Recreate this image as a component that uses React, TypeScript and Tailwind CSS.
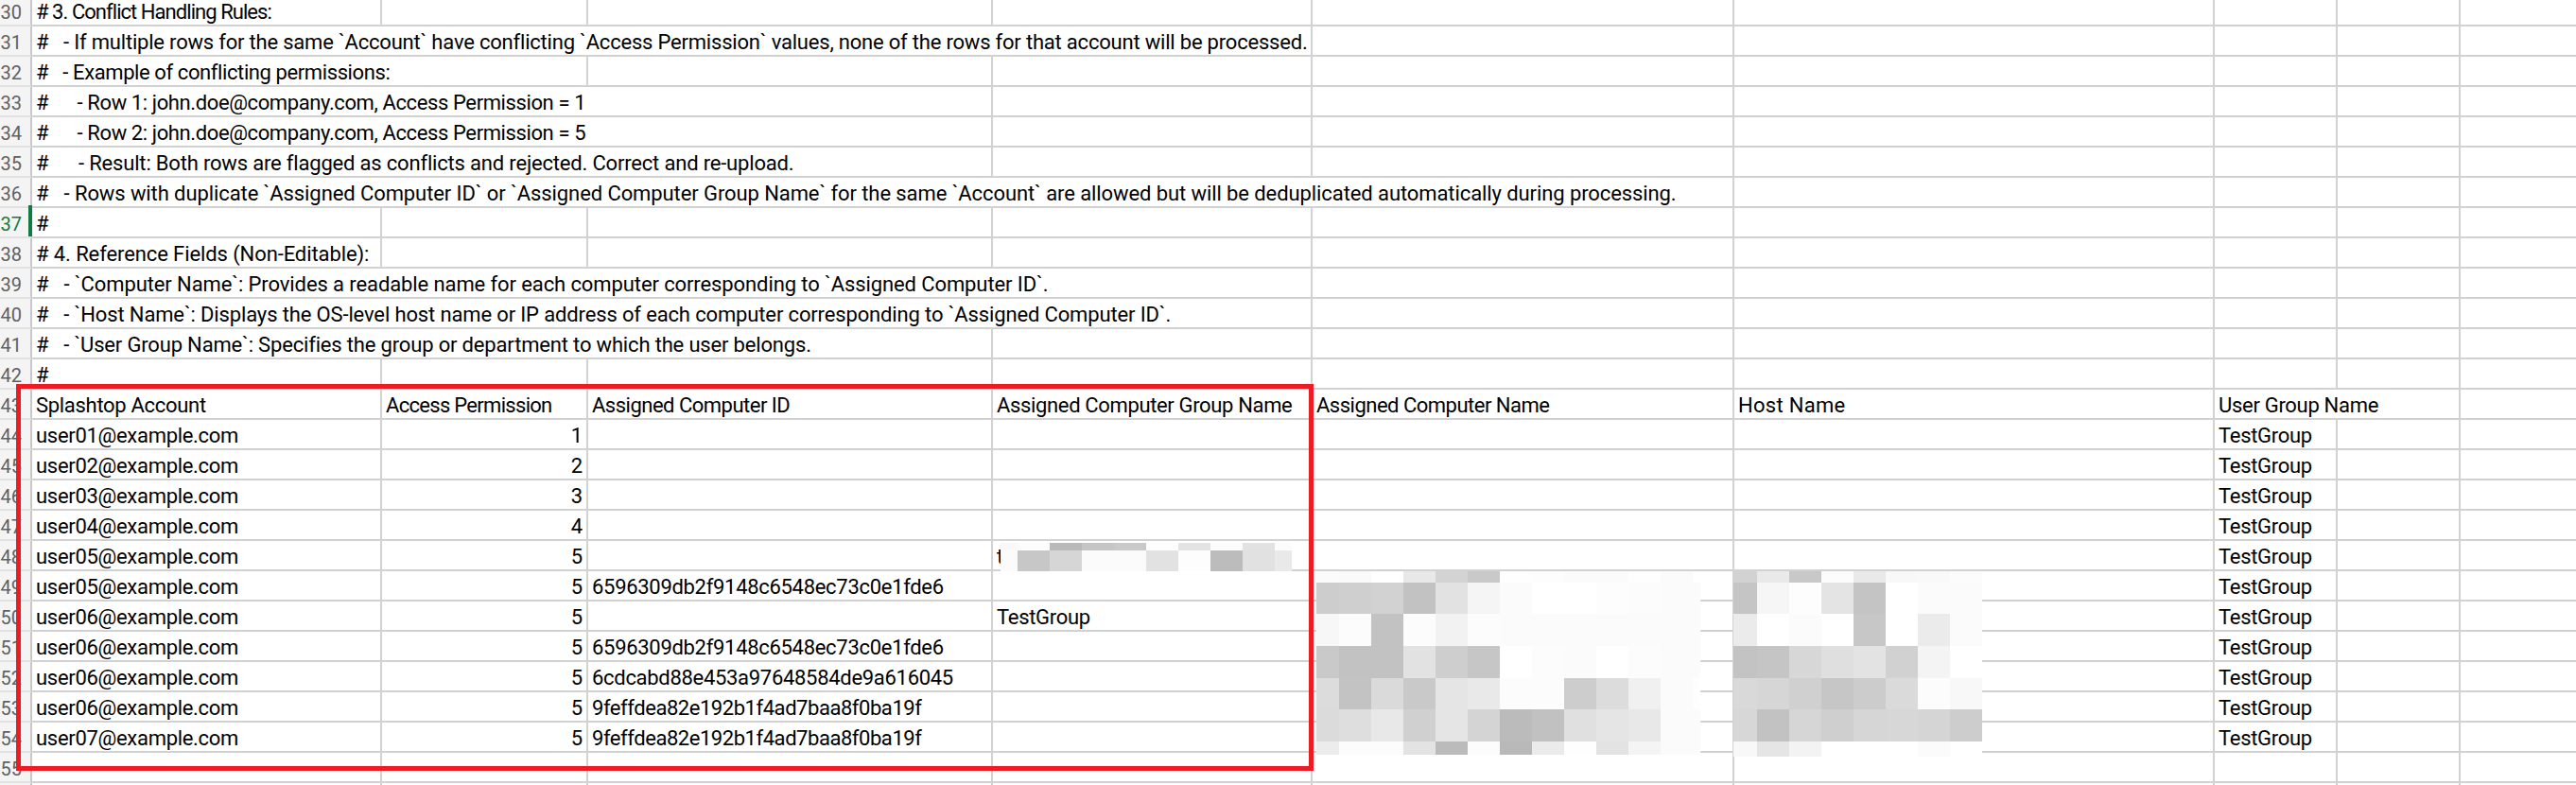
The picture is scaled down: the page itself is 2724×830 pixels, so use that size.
const FONT = "font-['Roboto','Liberation_Sans',sans-serif]";

type Cell = { t?: string; cls?: string };

const span2 = "col-span-2";
const span3 = "col-span-3";
const span4 = "col-span-4";
const span5 = "col-span-5";

function comment(text: string, cls: string, cols: number): Cell[] {
  const out: Cell[] = [{ t: text, cls }];
  for (let i = cols; i < 9; i++) out.push({});
  return out;
}

const rows: { n: number; cells: Cell[] }[] = [
  { n: 30, cells: comment("# 3. Conflict Handling Rules:", "tracking-[-0.95px]", 1) },
  { n: 31, cells: comment("#   - If multiple rows for the same `Account` have conflicting `Access Permission` values, none of the rows for that account will be processed.", `${span4} tracking-[-0.2px]`, 4) },
  { n: 32, cells: comment("#   - Example of conflicting permissions:", `${span2} tracking-[-0.4px]`, 2) },
  { n: 33, cells: comment("#      - Row 1: john.doe@company.com, Access Permission = 1", `${span3} tracking-[-0.39px]`, 3) },
  { n: 34, cells: comment("#      - Row 2: john.doe@company.com, Access Permission = 5", `${span3} tracking-[-0.39px]`, 3) },
  { n: 35, cells: comment("#      - Result: Both rows are flagged as conflicts and rejected. Correct and re-upload.", `${span3} tracking-[-0.18px]`, 3) },
  { n: 36, cells: comment("#   - Rows with duplicate `Assigned Computer ID` or `Assigned Computer Group Name` for the same `Account` are allowed but will be deduplicated automatically during processing.", `${span5} tracking-[-0.09px]`, 5) },
  { n: 37, cells: comment("#", "", 1) },
  { n: 38, cells: comment("# 4. Reference Fields (Non-Editable):", "tracking-[-0.1px]", 1) },
  { n: 39, cells: comment("#   - `Computer Name`: Provides a readable name for each computer corresponding to `Assigned Computer ID`.", `${span4} tracking-[-0.1px]`, 4) },
  { n: 40, cells: comment("#   - `Host Name`: Displays the OS-level host name or IP address of each computer corresponding to `Assigned Computer ID`.", `${span4} tracking-[-0.14px]`, 4) },
  { n: 41, cells: comment("#   - `User Group Name`: Specifies the group or department to which the user belongs.", `${span3} tracking-[-0.17px]`, 3) },
  { n: 42, cells: comment("#", "", 1) },
  {
    n: 43,
    cells: [
      { t: "Splashtop Account", cls: "tracking-[-0.3px]" },
      { t: "Access Permission", cls: "tracking-[-0.7px]" },
      { t: "Assigned Computer ID", cls: "tracking-[-0.5px]" },
      { t: "Assigned Computer Group Name", cls: "tracking-[-0.35px]" },
      { t: "Assigned Computer Name", cls: "tracking-[-0.5px]" },
      { t: "Host Name", cls: "tracking-[0.3px]" },
      { t: "User Group Name", cls: `${span2} tracking-[-0.3px]` },
      {},
    ],
  },
];

const data: [number, string, string, string, string, string][] = [
  [44, "user01@example.com", "1", "", "", ""],
  [45, "user02@example.com", "2", "", "", ""],
  [46, "user03@example.com", "3", "", "", ""],
  [47, "user04@example.com", "4", "", "", ""],
  [48, "user05@example.com", "5", "", "", "t"],
  [49, "user05@example.com", "5", "6596309db2f9148c6548ec73c0e1fde6", "tracking-[-0.3px]", ""],
  [50, "user06@example.com", "5", "", "", "TestGroup"],
  [51, "user06@example.com", "5", "6596309db2f9148c6548ec73c0e1fde6", "tracking-[-0.3px]", ""],
  [52, "user06@example.com", "5", "6cdcabd88e453a97648584de9a616045", "tracking-[-0.3px]", ""],
  [53, "user06@example.com", "5", "9feffdea82e192b1f4ad7baa8f0ba19f", "tracking-[-0.45px]", ""],
  [54, "user07@example.com", "5", "9feffdea82e192b1f4ad7baa8f0ba19f", "tracking-[-0.45px]", ""],
];

for (const [n, a, p, id, idCls, g] of data) {
  rows.push({
    n,
    cells: [
      { t: a, cls: "tracking-[-0.3px]" },
      { t: p, cls: "justify-end pr-[4px]" },
      { t: id, cls: idCls },
      { t: g, cls: "tracking-[-0.3px]" },
      {},
      {},
      { t: "TestGroup", cls: "tracking-[-0.3px]" },
      {},
      {},
    ],
  });
}
rows.push({ n: 55, cells: Array.from({ length: 9 }, () => ({})) });
rows.push({ n: 56, cells: Array.from({ length: 9 }, () => ({})) });

const computerMosaic = [
  ["fbfbfb", "fafafa", "ffffff", "e8e8e8", "d3d3d3", "c9c9c9", "fefefe", "fdfdfd", "fbfbfb", "fbfbfb", "fefefe", "fbfbfb", "ffffff"],
  ["cdcdcd", "cfcfcf", "d2d2d2", "c2c2c2", "e2e2e2", "f5f5f5", "fbfbfb", "ffffff", "ffffff", "fdfdfd", "fcfcfc", "fbfbfb", "fbfbfb"],
  ["f7f7f7", "fcfcfc", "c2c2c2", "fcfcfc", "f2f2f2", "fcfcfc", "fbfbfb", "fbfbfb", "fbfbfb", "fbfbfb", "fbfbfb", "fbfbfb", "fbfbfb"],
  ["c9c9c9", "c2c2c2", "c2c2c2", "e2e2e2", "cecece", "c6c6c6", "ffffff", "fcfcfc", "fbfbfb", "ffffff", "fcfcfc", "fbfbfb", "fbfbfb"],
  ["dcdcdc", "c3c3c3", "dadada", "c9c9c9", "e5e5e5", "e9e9e9", "fcfcfc", "fcfcfc", "cdcdcd", "dcdcdc", "f0f0f0", "fbfbfb", "fefefe"],
  ["dbdbdb", "dedede", "e8e8e8", "d0d0d0", "e5e5e5", "d4d4d4", "bbbbbb", "c1c1c1", "e0e0e0", "e5e5e5", "e8e8e8", "fbfbfb", "fbfbfb"],
  ["ececec", "fcfcfc", "fcfcfc", "e3e3e3", "bbbbbb", "fcfcfc", "b9b9b9", "ebebeb", "fefefe", "e3e3e3", "f4f4f4", "fbfbfb", "fbfbfb"],
];

const hostMosaic = [
  ["d2d2d2", "e9e9e9", "c8c8c8", "fcfcfc", "e9e9e9", "f8f8f8", "f9f9f9", "fcfcfc"],
  ["c5c5c5", "f6f6f6", "fdfdfd", "e4e4e4", "c4c4c4", "ffffff", "fbfbfb", "fbfbfb"],
  ["ebebeb", "ffffff", "fbfbfb", "ffffff", "c7c7c7", "ffffff", "ebebeb", "fbfbfb"],
  ["c3c3c3", "c5c5c5", "d7d7d7", "dfdfdf", "e3e3e3", "d1d1d1", "f4f4f4", "ffffff"],
  ["d9d9d9", "d6d6d6", "d0d0d0", "c6c6c6", "cccccc", "dadada", "fcfcfc", "f8f8f8"],
  ["d7d7d7", "c2c2c2", "d6d6d6", "cfcfcf", "d6d6d6", "d7d7d7", "d5d5d5", "cdcdcd"],
  ["f8f8f8", "e5e5e5", "f3f3f3", "ffffff", "ffffff", "ffffff", "fbfbfb", "ffffff"],
];

const groupMosaic = [
  ["f9f9f9", "fcfcfc", "b9b9b9", "c5c5c5", "c9c9c9", "fefefe", "e3e3e3", "fcfcfc", "e2e2e2", "fcfcfc"],
  ["fbfbfb", "c7c7c7", "d6d6d6", "fbfbfb", "fbfbfb", "e2e2e2", "fdfdfd", "bcbcbc", "e1e1e1", "e9e9e9"],
];

function Mosaic({ data, className }: { data: string[][]; className: string }) {
  return (
    <div className={`absolute grid ${className}`}>
      {data.flat().map((c, i) => (
        <div key={i} style={{ backgroundColor: `#${c}` }} />
      ))}
    </div>
  );
}

function Row({ n, cells }: { n: number; cells: Cell[] }) {
  const active = n === 37;
  const first = n === 30;
  return (
    <div
      className={`grid grid-cols-[34px_370px_218px_428px_338px_446px_508px_130px_130px_130px] ${
        first ? "h-[28px]" : "h-[32px]"
      }`}
    >
      <div
        className={`relative flex items-end justify-end border-b-2 border-r-2 border-b-[#e1e1e1] border-r-[#c8c8c8] bg-[#f4f4f4] pr-[9px] text-[20px] leading-[26px] ${
          active ? "text-[#107c41]" : "text-[#616161]"
        }`}
      >
        {n < 56 && <span>{n}</span>}
        {active && <div className="absolute -top-[3px] bottom-0 -right-[2px] w-[4px] bg-[#107c41]" />}
      </div>
      {cells.map((c, i) => (
        <div
          key={i}
          className={`flex items-end whitespace-pre border-b-2 border-r-2 border-[#d2d2d2] pl-[4px] text-[22px] leading-[26px] text-black ${
            c.cls ?? ""
          }`}
        >
          {c.t}
        </div>
      ))}
    </div>
  );
}

export default function App() {
  return (
    <div className={`relative h-[830px] w-[2724px] overflow-hidden bg-white ${FONT}`}>
      {rows.map((r) => (
        <Row key={r.n} n={r.n} cells={r.cells} />
      ))}

      <Mosaic
        data={groupMosaic}
        className="left-[1058px] top-[574px] grid-cols-[18px_34px_34px_34px_34px_34px_34px_34px_34px_18px] grid-rows-[8px_22px]"
      />
      <Mosaic
        data={computerMosaic}
        className="left-[1392px] top-[604px] grid-cols-[24px_34px_34px_34px_34px_34px_34px_34px_34px_34px_34px_34px_8px] grid-rows-[12px_33px_34px_34px_33px_34px_14px]"
      />
      <Mosaic
        data={hostMosaic}
        className="left-[1833px] top-[604px] grid-cols-[25px_34px_34px_34px_34px_34px_34px_34px] grid-rows-[12px_33px_34px_34px_33px_34px_16px]"
      />

      <div className="pointer-events-none absolute left-[17px] top-[406px] h-[409px] w-[1372px] border-[5px] border-[#ed1c24]" />
    </div>
  );
}
